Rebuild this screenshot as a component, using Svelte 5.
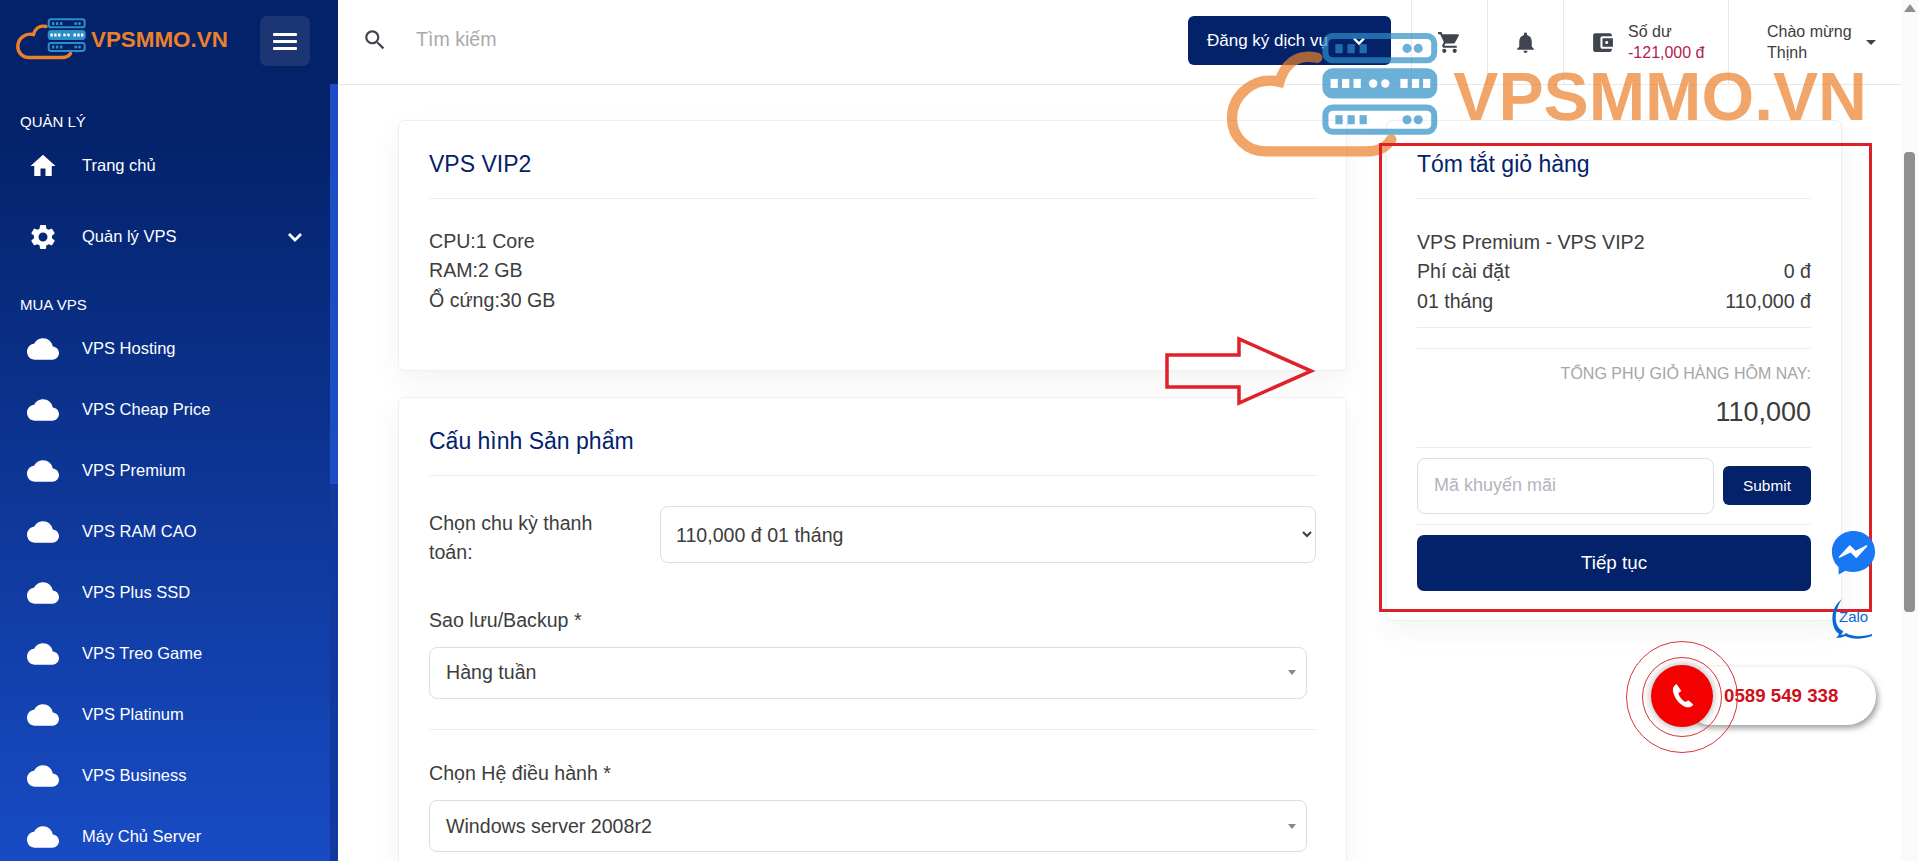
<script>
	const clouds = [
		'VPS Hosting',
		'VPS Cheap Price',
		'VPS Premium',
		'VPS RAM CAO',
		'VPS Plus SSD',
		'VPS Treo Game',
		'VPS Platinum',
		'VPS Business',
		'Máy Chủ Server'
	];
	const specs = ['CPU:1 Core', 'RAM:2 GB', 'Ổ cứng:30 GB'];
	const icons = {
		home: 'M10 20v-6h4v6h5v-8h3L12 3 2 12h3v8z',
		gear: 'M19.14 12.94c.04-.3.06-.61.06-.94 0-.32-.02-.64-.07-.94l2.03-1.58c.18-.14.23-.41.12-.61l-1.92-3.32c-.12-.22-.37-.29-.59-.22l-2.39.96c-.5-.38-1.03-.7-1.62-.94l-.36-2.54c-.04-.24-.24-.41-.48-.41h-3.84c-.24 0-.43.17-.47.41l-.36 2.54c-.59.24-1.13.57-1.62.94l-2.39-.96c-.22-.08-.47 0-.59.22L2.74 8.87c-.12.21-.08.47.12.61l2.03 1.58c-.05.3-.09.63-.09.94s.02.64.07.94l-2.03 1.58c-.18.14-.23.41-.12.61l1.92 3.32c.12.22.37.29.59.22l2.39-.96c.5.38 1.03.7 1.62.94l.36 2.54c.05.24.24.41.48.41h3.84c.24 0 .44-.17.47-.41l.36-2.54c.59-.24 1.13-.56 1.62-.94l2.39.96c.22.08.47 0 .59-.22l1.92-3.32c.12-.22.07-.47-.12-.61l-2.01-1.58zM12 15.6c-1.98 0-3.6-1.62-3.6-3.6s1.62-3.6 3.6-3.6 3.6 1.62 3.6 3.6-1.62 3.6-3.6 3.6z',
		cloud: 'M19.35 10.04C18.67 6.59 15.64 4 12 4 9.11 4 6.6 5.64 5.35 8.04 2.34 8.36 0 10.91 0 14c0 3.31 2.69 6 6 6h13c2.76 0 5-2.24 5-5 0-2.64-2.05-4.78-4.65-4.96z',
		cart: 'M7 18c-1.1 0-1.99.9-1.99 2S5.9 22 7 22s2-.9 2-2-.9-2-2-2zM1 2v2h2l3.6 7.59-1.35 2.45c-.16.28-.25.61-.25.96 0 1.1.9 2 2 2h12v-2H7.42c-.14 0-.25-.11-.25-.25l.03-.12.9-1.63h7.45c.75 0 1.41-.41 1.75-1.03l3.58-6.49c.08-.14.12-.31.12-.48 0-.55-.45-1-1-1H5.21l-.94-2H1zm16 16c-1.1 0-1.99.9-1.99 2s.89 2 1.99 2 2-.9 2-2-.9-2-2-2z',
		bell: 'M12 22c1.1 0 2-.9 2-2h-4c0 1.1.9 2 2 2zm6-6v-5c0-3.07-1.63-5.64-4.5-6.32V4c0-.83-.67-1.5-1.5-1.5s-1.5.67-1.5 1.5v.68C7.64 5.36 6 7.92 6 11v5l-2 2v1h16v-1l-2-2z',
		wallet: 'M21 18v1c0 1.1-.9 2-2 2H5c-1.11 0-2-.9-2-2V5c0-1.1.89-2 2-2h14c1.1 0 2 .9 2 2v1h-9c-1.11 0-2 .9-2 2v8c0 1.1.89 2 2 2h9zm-9-2h10V8H12v8zm4-2.5c-.83 0-1.5-.67-1.5-1.5s.67-1.5 1.5-1.5 1.5.67 1.5 1.5-.67 1.5-1.5 1.5z',
		search: 'M15.5 14h-.79l-.28-.27C15.41 12.59 16 11.11 16 9.5 16 5.91 13.09 3 9.5 3S3 5.91 3 9.5 5.91 16 9.5 16c1.61 0 3.09-.59 4.23-1.57l.27.28v.79l5 4.99L20.49 19l-4.99-5zm-6 0C7.01 14 5 11.99 5 9.5S7.01 5 9.5 5 14 7.01 14 9.5 11.99 14 9.5 14z'
	};
</script>

{#snippet logo()}
	<svg class="logo-svg" viewBox="16 16 214 44" xmlns="http://www.w3.org/2000/svg">
		<path
			d="M46 26.5C39 25 35 29 33.5 34.5 25 32.5 17.8 39 17.8 46.5 17.8 53 23 57.5 29 57.5L62 57.5C66 57.5 68.5 56.5 70.5 53.5"
			fill="none"
			stroke="#ec802a"
			stroke-width="3.4"
			stroke-linecap="round"
		/>
		<g fill="none" stroke="#2e8ec7" stroke-width="2">
			<rect x="48.7" y="19.3" width="36" height="8" rx="2.4" />
			<rect x="48.7" y="31" width="36" height="8" rx="2.4" fill="#2e8ec7" />
			<rect x="48.7" y="43" width="36" height="8" rx="2.4" />
		</g>
		<g fill="#2e8ec7">
			<rect x="52" y="22" width="2.4" height="3" /><rect x="56" y="22" width="2.4" height="3" /><rect x="60" y="22" width="2.4" height="3" />
			<circle cx="75.7" cy="23.4" r="1.5" /><circle cx="79.4" cy="23.4" r="1.5" />
			<rect x="52" y="45.5" width="2.4" height="3" /><rect x="56" y="45.5" width="2.4" height="3" /><rect x="60" y="45.5" width="2.4" height="3" />
			<circle cx="75.7" cy="47" r="1.5" /><circle cx="79.4" cy="47" r="1.5" />
		</g>
		<g fill="#fff">
			<rect x="50.4" y="33.5" width="2.4" height="3" /><rect x="54.2" y="33.5" width="2.4" height="3" /><rect x="58" y="33.5" width="2.4" height="3" />
			<circle cx="64.5" cy="35" r="1.4" /><circle cx="68.5" cy="35" r="1.4" />
			<rect x="73.5" y="33.5" width="2.4" height="3" /><rect x="77.3" y="33.5" width="2.4" height="3" /><rect x="81" y="33.5" width="2.4" height="3" />
		</g>
		<text x="91" y="47" class="logo-text">VPSMMO.VN</text>
	</svg>
{/snippet}

<div class="app">
	<aside class="sidebar">
		<div class="side-head">
			<div class="side-logo">{@render logo()}</div>
			<button class="toggle" aria-label="Menu">
				<span></span><span></span><span></span>
			</button>
		</div>
		<div class="side-body">
			<nav class="nav">
				<div class="nav-label">QUẢN LÝ</div>
				<a class="nav-item first" href="#home">
					<svg class="nav-icon" viewBox="0 0 24 24"><path d={icons.home} /></svg>
					<span>Trang chủ</span>
				</a>
				<a class="nav-item second" href="#vps">
					<svg class="nav-icon" viewBox="0 0 24 24"><path d={icons.gear} /></svg>
					<span>Quản lý VPS</span>
					<svg class="chevron" viewBox="0 0 16 16"><path d="M2 5l6 6 6-6" /></svg>
				</a>
				<div class="nav-label buy">MUA VPS</div>
				{#each clouds as name, i}
					<a class="nav-item" class:first={i === 0} href="#cloud">
						<svg class="nav-icon cloud" viewBox="0 0 24 24"><path d={icons.cloud} /></svg>
						<span>{name}</span>
					</a>
				{/each}
			</nav>
			<div class="side-rail"><div class="side-thumb"></div></div>
		</div>
	</aside>

	<div class="main">
		<header class="topbar">
			<div class="search">
				<svg class="top-icon search-icon" viewBox="0 0 24 24"><path d={icons.search} /></svg>
				<span class="search-text">Tìm kiếm</span>
			</div>
			<button class="register">
				Đăng ký dịch vụ
				<svg class="reg-chevron" viewBox="0 0 16 16"><path d="M3 5.5l5 5 5-5" /></svg>
			</button>
			<div class="cell icon-cell"><svg class="top-icon" viewBox="0 0 24 24"><path d={icons.cart} /></svg></div>
			<div class="cell icon-cell"><svg class="top-icon" viewBox="0 0 24 24"><path d={icons.bell} /></svg></div>
			<div class="cell wallet">
				<svg class="top-icon" viewBox="0 0 24 24"><path d={icons.wallet} /></svg>
				<div class="two-line">
					<div>Số dư</div>
					<div class="balance">-121,000 đ</div>
				</div>
			</div>
			<div class="cell user">
				<div class="two-line">
					<div>Chào mừng</div>
					<div>Thịnh</div>
				</div>
				<span class="caret"></span>
			</div>
		</header>

		<main class="content">
			<div class="left-col">
				<section class="card plan">
					<h2 class="card-title">VPS VIP2</h2>
					<div class="spec">
						{#each specs as line}
							<div>{line}</div>
						{/each}
					</div>
				</section>

				<section class="card config">
					<h2 class="card-title">Cấu hình Sản phẩm</h2>
					<div class="cycle">
						<label class="cycle-label" for="cycle">Chọn chu kỳ thanh toán:</label>
						<select id="cycle" class="native">
							<option>110,000 đ 01 tháng</option>
						</select>
					</div>
					<div class="field">
						<div class="field-label">Sao lưu/Backup *</div>
						<div class="pick">Hàng tuần<span class="pick-arrow"></span></div>
					</div>
					<hr class="rule field-rule" />
					<div class="field os">
						<div class="field-label">Chọn Hệ điều hành *</div>
						<div class="pick">Windows server 2008r2<span class="pick-arrow"></span></div>
					</div>
				</section>
			</div>

			<section class="card summary">
				<h2 class="card-title">Tóm tắt giỏ hàng</h2>
				<div class="lines">
					<div>VPS Premium - VPS VIP2</div>
					<div class="line"><span>Phí cài đặt</span><span>0 đ</span></div>
					<div class="line"><span>01 tháng</span><span>110,000 đ</span></div>
				</div>
				<hr class="rule gap-a" />
				<hr class="rule gap-b" />
				<div class="subtotal-label">TỔNG PHỤ GIỎ HÀNG HÔM NAY:</div>
				<div class="subtotal">110,000</div>
				<hr class="rule gap-c" />
				<div class="promo">
					<input class="promo-input" placeholder="Mã khuyến mãi" />
					<button class="submit">Submit</button>
				</div>
				<hr class="rule gap-d" />
				<button class="checkout">Tiếp tục</button>
			</section>
		</main>
	</div>

	<div class="page-rail">
		<span class="rail-up"></span>
		<div class="rail-thumb"></div>
	</div>

	<!-- pasted-on marks that sit over the page -->
	<div class="watermark">{@render logo()}</div>
	<div class="red-box"></div>
	<svg class="red-arrow" viewBox="0 0 150 70">
		<path d="M2 19H74V3L146 35 74 67V51H2Z" fill="none" stroke="#e0202a" stroke-width="3.5" />
	</svg>

	<svg class="messenger" viewBox="0 0 48 48">
		<path
			d="M24 1C11 1 1 10.6 1 23.2c0 6.6 2.7 12.3 7.1 16.2v8l7.300-4c2.700.9 5.600 1.300 8.600 1.300 13 0 23-9.600 23-21.500C47 10.600 37 1 24 1z"
			fill="#1877f2"
		/>
		<path d="M9 29l11-12 6 6 12-6-11 12-6-6z" fill="#fff" stroke="#fff" stroke-width="1.500" stroke-linejoin="round" />
	</svg>

	<svg class="zalo" viewBox="0 0 40 44">
		<path d="M10 1C2 7-1 16 1 26c1 5 3 8 6 10-1 2-2 3-3 4 4 0 7-1 9-2 6 3 16 4 27 0v-2c-9 3-20 3-26-1-1 1-3 2-5 2 1-1 2-3 2-4C5 30 3 24 4 16 5 10 7 5 10 1z" fill="#0a68d4" />
		<text x="7" y="24" class="zalo-text">Zalo</text>
	</svg>

	<div class="call">
		<span class="call-number">0589 549 338</span>
		<span class="ring ring-big"></span>
		<span class="ring ring-small"></span>
		<span class="call-btn">
			<svg viewBox="0 0 24 24"><path d="M8.200 3.500C6 4.500 5 7 6 10c1.500 4.500 4 7.500 8 9.500 2.500 1 5 .5 6-1.500l-3.500-3-2 1.200C12 15 10 12.500 9.500 10l2-1.500z" /></svg>
		</span>
	</div>
</div>

<style>
	:global(body) {
		margin: 0;
		background: #fff;
	}

	.app {
		position: relative;
		display: grid;
		grid-template-columns: 338px 1fr 17px;
		height: 861px;
		overflow: hidden;
		font-family: 'Liberation Sans', Arial, sans-serif;
		color: #3d3d3d;
	}

	/* sidebar */
	.sidebar {
		display: flex;
		flex-direction: column;
		color: #fff;
		background: linear-gradient(180deg, #03226a 0%, #03226a 15%, #184bc4 100%);
		min-height: 0;
	}

	.side-head {
		display: flex;
		justify-content: space-between;
		align-items: flex-start;
		height: 84px;
		box-sizing: border-box;
		padding: 16px 28px 0 16px;
		flex: none;
	}

	.side-logo {
		width: 214px;
		height: 44px;
	}

	.logo-svg {
		display: block;
		width: 100%;
		height: 100%;
		overflow: visible;
	}

	.logo-text {
		font-family: 'Liberation Sans', Arial, sans-serif;
		font-weight: 700;
		font-size: 22.4px;
		fill: #ec802a;
	}

	.toggle {
		display: flex;
		flex-direction: column;
		justify-content: center;
		gap: 4px;
		align-items: center;
		width: 50px;
		height: 50px;
		padding: 0;
		border: none;
		border-radius: 7px;
		background: #1c3673;
	}

	.toggle span {
		display: block;
		width: 24px;
		height: 3px;
		border-radius: 1px;
		background: #fff;
	}

	.side-body {
		display: flex;
		flex: 1;
		min-height: 0;
	}

	.nav {
		flex: 1;
		padding-top: 28px;
		min-width: 0;
	}

	.nav-label {
		height: 20px;
		padding-left: 20px;
		font-size: 15px;
		line-height: 20px;
	}

	.nav-label.buy {
		margin-top: 28px;
	}

	.nav-item {
		display: flex;
		align-items: center;
		height: 61px;
		padding-left: 28px;
		color: #fff;
		text-decoration: none;
		font-size: 16.5px;
	}

	.nav-item.first {
		margin-top: 3px;
	}

	.nav-item.second {
		margin-top: 10px;
	}

	.nav-icon {
		width: 30px;
		height: 30px;
		margin-right: 24px;
		fill: #fff;
		flex: none;
	}

	.nav-icon.cloud {
		width: 32px;
		height: 32px;
		margin-left: -1px;
		margin-right: 23px;
	}

	.chevron {
		width: 16px;
		height: 16px;
		margin-left: auto;
		margin-right: 27px;
		fill: none;
		stroke: #fff;
		stroke-width: 2.8;
	}

	.side-rail {
		width: 8px;
		flex: none;
		background: #123a9e;
	}

	.side-thumb {
		height: 400px;
		background: #1b4ec4;
	}

	/* top bar */
	.main {
		display: flex;
		flex-direction: column;
		min-width: 0;
		overflow: hidden;
	}

	.topbar {
		display: flex;
		align-items: stretch;
		height: 85px;
		box-sizing: border-box;
		border-bottom: 1px solid #e8e8e8;
		flex: none;
	}

	.search {
		display: flex;
		align-items: center;
		flex: 1;
		padding-left: 24px;
		height: 79px;
	}

	.top-icon {
		width: 25px;
		height: 25px;
		fill: #3f4450;
		flex: none;
	}

	.search-icon {
		margin-right: 28px;
		width: 26px;
		height: 26px;
	}

	.search-text {
		font-size: 19.6px;
		color: #a9a9a9;
	}

	.register {
		display: flex;
		align-items: center;
		justify-content: space-between;
		align-self: flex-start;
		width: 203px;
		height: 49px;
		margin: 16px 20px 0 0;
		padding: 0 24px 0 19px;
		border: none;
		border-radius: 6px;
		background: #03226a;
		color: #fff;
		font: 17px 'Liberation Sans', Arial, sans-serif;
	}

	.reg-chevron {
		width: 16px;
		height: 16px;
		fill: none;
		stroke: #fff;
		stroke-width: 2.4;
	}

	.cell {
		display: flex;
		align-items: center;
		box-sizing: border-box;
		border-left: 1px solid #e8e8e8;
		font-size: 16px;
		line-height: 21px;
	}

	.icon-cell {
		justify-content: center;
		width: 76px;
	}

	.wallet {
		width: 165px;
		padding-left: 26px;
		gap: 13px;
	}

	.user {
		width: 173px;
		padding-left: 38px;
		gap: 14px;
	}

	.balance {
		color: #b5214f;
	}

	.caret {
		width: 0;
		height: 0;
		border-left: 5px solid transparent;
		border-right: 5px solid transparent;
		border-top: 5px solid #3f4450;
	}

	/* cards */
	.content {
		display: grid;
		grid-template-columns: 949px 456px;
		gap: 39px;
		align-items: start;
		padding: 35px 0 0 60px;
	}

	.left-col {
		display: flex;
		flex-direction: column;
		gap: 26px;
	}

	.card {
		box-sizing: border-box;
		padding: 28px 30px 30px;
		border: 1px solid #efefef;
		border-radius: 6px;
		background: #fff;
		box-shadow: 0 10px 30px rgba(0, 0, 0, 0.05);
		font-size: 19.6px;
		line-height: 29.3px;
	}

	.card-title {
		margin: 0;
		height: 49px;
		border-bottom: 1px solid #ececec;
		color: #03226a;
		font-size: 23px;
		font-weight: 400;
		line-height: 30px;
	}

	.plan {
		height: 251px;
	}

	.spec {
		margin-top: 28px;
	}

	.config {
		height: 520px;
	}

	.cycle {
		display: grid;
		grid-template-columns: 231px 1fr;
		margin-top: 30px;
	}

	.cycle-label {
		padding: 3px 30px 0 0;
	}

	.native {
		box-sizing: border-box;
		width: 100%;
		height: 57px;
		padding: 0 11px;
		border: 1px solid #dedede;
		border-radius: 8px;
		background: #fff;
		color: #3d3d3d;
		font: 19.6px 'Liberation Sans', Arial, sans-serif;
	}

	.field {
		margin-top: 38px;
	}

	.field.os {
		margin-top: 29px;
	}

	.field-label {
		margin-bottom: 12px;
	}

	.pick {
		display: flex;
		align-items: center;
		justify-content: space-between;
		box-sizing: border-box;
		width: 878px;
		height: 52px;
		padding: 0 10px 0 16px;
		border: 1px solid #dedede;
		border-radius: 8px;
	}

	.pick-arrow {
		width: 0;
		height: 0;
		border-left: 4px solid transparent;
		border-right: 4px solid transparent;
		border-top: 5px solid #888;
	}

	.rule {
		margin: 0;
		border: none;
		border-top: 1px solid #ececec;
	}

	.field-rule {
		margin-top: 30px;
	}

	.summary {
		height: 501px;
	}

	.lines {
		margin-top: 29px;
	}

	.line {
		display: flex;
		justify-content: space-between;
	}

	.gap-a {
		margin-top: 11px;
	}

	.gap-b {
		margin-top: 20px;
	}

	.subtotal-label {
		margin-top: 14px;
		color: #a5a5a5;
		font-size: 16px;
		line-height: 22px;
		text-align: right;
	}

	.subtotal {
		margin-top: 10px;
		font-size: 27px;
		line-height: 34px;
		text-align: right;
	}

	.gap-c {
		margin-top: 18px;
	}

	.promo {
		display: flex;
		align-items: center;
		justify-content: space-between;
		margin-top: 10px;
	}

	.promo-input {
		box-sizing: border-box;
		width: 297px;
		height: 56px;
		padding: 0 16px;
		border: 1px solid #dedede;
		border-radius: 8px;
		outline: none;
		font: 18px 'Liberation Sans', Arial, sans-serif;
	}

	.promo-input::placeholder {
		color: #b4b4bc;
	}

	.submit {
		width: 88px;
		height: 39px;
		padding: 0;
		border: none;
		border-radius: 6px;
		background: #03226a;
		color: #fff;
		font: 15.4px 'Liberation Sans', Arial, sans-serif;
	}

	.gap-d {
		margin-top: 10px;
	}

	.checkout {
		display: block;
		width: 100%;
		height: 56px;
		margin-top: 10px;
		padding: 0;
		border: none;
		border-radius: 7px;
		background: #03226a;
		color: #fff;
		font: 18.8px 'Liberation Sans', Arial, sans-serif;
	}

	/* page scrollbar */
	.page-rail {
		display: flex;
		flex-direction: column;
		align-items: center;
		background: #fafafa;
	}

	.rail-up {
		margin-top: 4px;
		border-left: 6px solid transparent;
		border-right: 6px solid transparent;
		border-bottom: 8px solid #8f8f8f;
	}

	.rail-thumb {
		width: 11px;
		height: 460px;
		margin-top: 140px;
		border-radius: 4px;
		background: #8f8f8f;
	}

	/* overlays */
	.watermark {
		position: absolute;
		left: 1226px;
		top: 26px;
		width: 648px;
		height: 133px;
		opacity: 0.7;
		pointer-events: none;
	}

	.red-box {
		position: absolute;
		left: 1379px;
		top: 143px;
		width: 493px;
		height: 469px;
		box-sizing: border-box;
		border: 3px solid #dd2027;
	}

	.red-arrow {
		position: absolute;
		left: 1165px;
		top: 336px;
		width: 150px;
		height: 70px;
	}

	.messenger {
		position: absolute;
		left: 1831px;
		top: 530px;
		width: 45px;
		height: 45px;
	}

	.zalo {
		position: absolute;
		left: 1832px;
		top: 598px;
		width: 40px;
		height: 44px;
	}

	.zalo-text {
		font-family: 'Liberation Sans', Arial, sans-serif;
		font-size: 15px;
		fill: #0a68d4;
	}

	.call {
		position: absolute;
		left: 1682px;
		top: 667px;
		display: flex;
		align-items: center;
		box-sizing: border-box;
		width: 194px;
		height: 58px;
		padding-left: 42px;
		border-radius: 29px;
		background: #fff;
		box-shadow: 2px 3px 6px rgba(0, 0, 0, 0.4);
	}

	.call-number {
		color: #cf1019;
		font-size: 18.7px;
		font-weight: 700;
	}

	.ring {
		position: absolute;
		box-sizing: border-box;
		border-radius: 50%;
		border: 1px solid #d9343a;
	}

	.ring-big {
		left: -56px;
		top: -26px;
		width: 112px;
		height: 112px;
	}

	.ring-small {
		left: -40px;
		top: -10px;
		width: 80px;
		height: 80px;
	}

	.call-btn {
		position: absolute;
		left: -31px;
		top: -2px;
		display: flex;
		align-items: center;
		justify-content: center;
		width: 62px;
		height: 62px;
		border-radius: 50%;
		background: #f40000;
		box-shadow: 0 0 8px rgba(0, 0, 0, 0.35);
	}

	.call-btn svg {
		width: 34px;
		height: 34px;
		fill: #fff;
	}
</style>
